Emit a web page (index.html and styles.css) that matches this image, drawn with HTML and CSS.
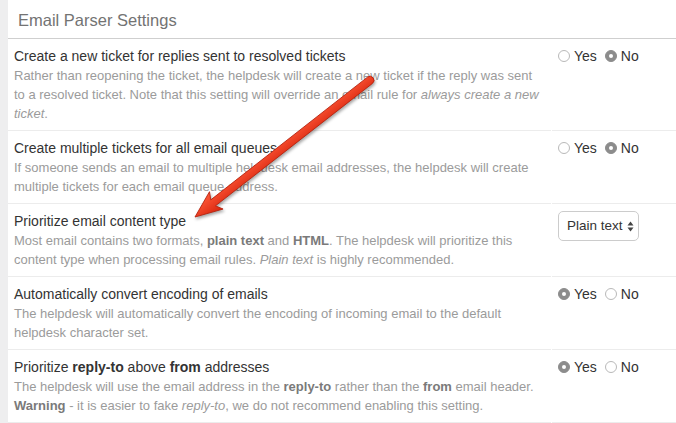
FILE: index.html
```html
<!DOCTYPE html>
<html>

<head>
    <title>Email Parser Settings</title>
    <link rel="stylesheet" href="styles.css">
</head>

<body>
    <div class="page">
        <div class="sidebar"></div>
        <div class="main">
            <h2 class="heading">Email Parser Settings</h2>

            <div class="settings">
                <div class="row">
                    <div class="info">
                        <div class="name">Create a new ticket for replies sent to resolved tickets</div>
                        <div class="desc">Rather than reopening the ticket, the helpdesk will create a new ticket if the reply was sent to a resolved ticket. Note that this setting will override an email rule for <em>always create a new ticket</em>.</div>
                    </div>
                    <div class="control">
                        <span class="radio"></span><span class="opt">Yes</span>
                        <span class="radio on"></span><span class="opt">No</span>
                    </div>
                </div>

                <div class="row">
                    <div class="info">
                        <div class="name">Create multiple tickets for all email queues</div>
                        <div class="desc">If someone sends an email to multiple helpdesk email addresses, the helpdesk will create multiple tickets for each email queue address.</div>
                    </div>
                    <div class="control">
                        <span class="radio"></span><span class="opt">Yes</span>
                        <span class="radio on"></span><span class="opt">No</span>
                    </div>
                </div>

                <div class="row">
                    <div class="info">
                        <div class="name">Prioritize email content type</div>
                        <div class="desc">Most email contains two formats, <b>plain text</b> and <b>HTML</b>. The helpdesk will prioritize this content type when processing email rules. <em>Plain text</em> is highly recommended.</div>
                    </div>
                    <div class="control">
                        <div class="select">
                            Plain text
                            <svg width="7" height="11" viewBox="0 0 7 11">
                                <path d="M3.5 0.5 L6.5 4.5 L0.5 4.5 Z" fill="#444" />
                                <path d="M3.5 10.5 L6.5 6.5 L0.5 6.5 Z" fill="#444" />
                            </svg>
                        </div>
                    </div>
                </div>

                <div class="row">
                    <div class="info">
                        <div class="name">Automatically convert encoding of emails</div>
                        <div class="desc">The helpdesk will automatically convert the encoding of incoming email to the default helpdesk character set.</div>
                    </div>
                    <div class="control">
                        <span class="radio on"></span><span class="opt">Yes</span>
                        <span class="radio"></span><span class="opt">No</span>
                    </div>
                </div>

                <div class="row">
                    <div class="info">
                        <div class="name">Prioritize <b>reply-to</b> above <b>from</b> addresses</div>
                        <div class="desc">The helpdesk will use the email address in the <b>reply-to</b> rather than the <b>from</b> email header. <b>Warning</b> - it is easier to fake <em>reply-to</em>, we do not recommend enabling this setting.</div>
                    </div>
                    <div class="control">
                        <span class="radio on"></span><span class="opt">Yes</span>
                        <span class="radio"></span><span class="opt">No</span>
                    </div>
                </div>
            </div>
        </div>
    </div>

    <!-- callout arrow pointing at the content type setting -->
    <svg class="arrow" width="676" height="423" viewBox="0 0 676 423">
        <defs>
            <linearGradient id="red" x1="0" y1="0" x2="0" y2="1">
                <stop offset="0" stop-color="#ff5a3a" />
                <stop offset="1" stop-color="#d8250d" />
            </linearGradient>
        </defs>
        <g transform="translate(195 217) rotate(-38)">
            <path d="M0 0 L27 -11 L23 -3.8 L222 -4 A4 4 0 0 1 222 4 L23 3.8 L27 11 Z"
                fill="url(#red)" stroke="#b5200c" stroke-width="0.8" stroke-linejoin="round" />
        </g>
    </svg>
</body>
</html>
```

FILE: styles.css
```css
body {
    margin: 0;
    font-family: "Liberation Sans", Arial, sans-serif;
    background-color: #ffffff;
    color: #333;
}

.page {
    display: flex;
    min-height: 423px;
}

.sidebar {
    width: 8px;
    background-color: #eeeeef;
    flex-shrink: 0;
}

.main {
    flex: 1;
}

.heading {
    margin: 0;
    height: 38px;
    padding: 0 10px;
    font-size: 16.5px;
    font-weight: normal;
    line-height: 40px;
    color: #737373;
    border-bottom: 1px solid #cfcfcf;
}

.row {
    display: grid;
    grid-template-columns: 1fr 124px;
    column-gap: 1px;
}

.info,
.control {
    padding: 7px 6px;
    border-bottom: 1px solid #ececec;
}

.name {
    font-size: 14px;
    line-height: 20px;
    color: #333;
}

.desc {
    font-size: 13px;
    line-height: 19px;
    color: #9b9b9b;
}

.desc b {
    color: #7a7a7a;
}

.control {
    display: flex;
    align-items: flex-start;
    font-size: 14px;
    line-height: 20px;
    color: #333;
}

.radio {
    width: 10px;
    height: 10px;
    margin-top: 4px;
    margin-right: 4px;
    border: 1px solid #b9b9b9;
    border-radius: 50%;
    background-color: #fff;
    position: relative;
}

.radio.on {
    background-color: #8c8c8c;
    border-color: #8c8c8c;
}

.radio.on::after {
    content: "";
    position: absolute;
    left: 3px;
    top: 3px;
    width: 4px;
    height: 4px;
    border-radius: 50%;
    background-color: #fff;
}

.opt {
    margin-right: 8px;
}

.select {
    display: flex;
    align-items: center;
    gap: 4px;
    height: 28px;
    padding: 0 4px 0 8px;
    border: 1px solid #cccccc;
    border-radius: 5px;
    font-size: 13.5px;
    color: #333;
}

.arrow {
    position: absolute;
    left: 0;
    top: 0;
    pointer-events: none;
    filter: drop-shadow(1px 2px 1.5px rgba(0, 0, 0, 0.35));
}
```
